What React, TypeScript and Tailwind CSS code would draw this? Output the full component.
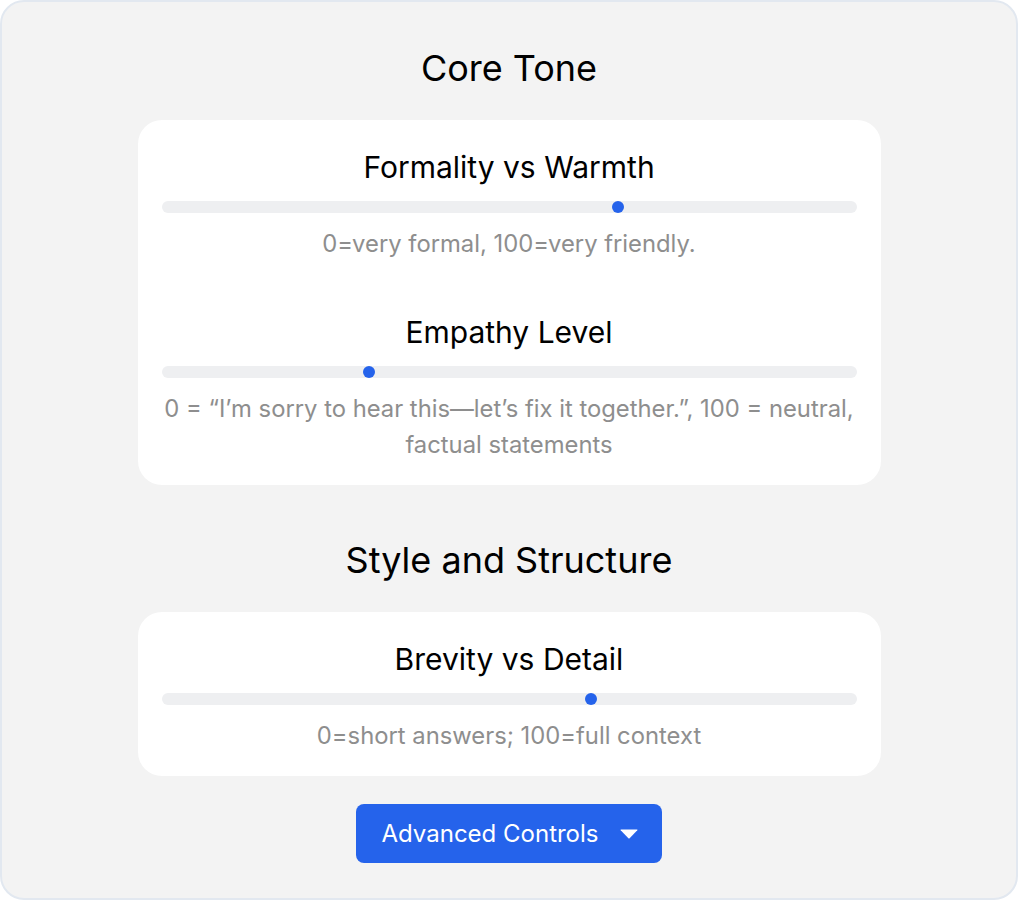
const font = { fontFamily: 'Inter, "Noto Sans", sans-serif' };

type SliderProps = {
  label: string;
  value: number;
  hint: string;
};

function Slider({ label, value, hint }: SliderProps) {
  return (
    <div className="flex flex-col items-center">
      <div className="text-[30px] leading-[42px] text-black">{label}</div>
      <div className="relative mt-[13px] h-3 w-full rounded-full bg-[#eeeff1]">
        {/* thumb */}
        <div
          className="absolute top-0 h-3 w-3 rounded-full bg-[#2563eb]"
          style={{ left: `calc((100% - 12px) * ${value / 100})` }}
        />
      </div>
      <p className="-mx-[4px] mt-[13px] text-center text-[23.8px] leading-[36px] text-[#8e8e8e]">{hint}</p>
    </div>
  );
}

function Card({ children }: { children: React.ReactNode }) {
  return (
    <div className="flex w-[743px] flex-col gap-[49px] rounded-3xl bg-white px-6 pt-[26px] pb-[22px]">
      {children}
    </div>
  );
}

export default function App() {
  return (
    <div style={font} className="h-[900px] w-[1018px] bg-white">
      <div className="flex h-full w-full flex-col items-center rounded-[24px] border-2 border-[#e2e8f0] bg-[#f3f3f3] pt-[46px]">
        <h2 className="text-[36px] leading-[40px] text-black">Core Tone</h2>
        <div className="mt-[32px]">
          <Card>
            <Slider label="Formality vs Warmth" value={66} hint="0=very formal, 100=very friendly." />
            <Slider
              label="Empathy Level"
              value={29.5}
              hint="0 = “I’m sorry to hear this—let’s fix it together.”, 100 = neutral, factual statements"
            />
          </Card>
        </div>

        <h2 className="mt-[55px] text-[36px] leading-[40px] text-black">Style and Structure</h2>
        <div className="mt-[32px]">
          <Card>
            <Slider label="Brevity vs Detail" value={62} hint="0=short answers; 100=full context" />
          </Card>
        </div>

        <button className="mt-[28px] flex h-[59px] items-center gap-[21px] rounded-lg bg-[#2563eb] pl-[25px] pr-[24px] text-[24px] text-white">
          <span>Advanced Controls</span>
          <svg width="18" height="10" viewBox="0 0 18 10" fill="white">
            <path d="M1 0.5 H17 Q17.8 0.5 17.3 1.2 L9.6 9.3 Q9 9.9 8.4 9.3 L0.7 1.2 Q0.2 0.5 1 0.5 Z" />
          </svg>
        </button>
      </div>
    </div>
  );
}
